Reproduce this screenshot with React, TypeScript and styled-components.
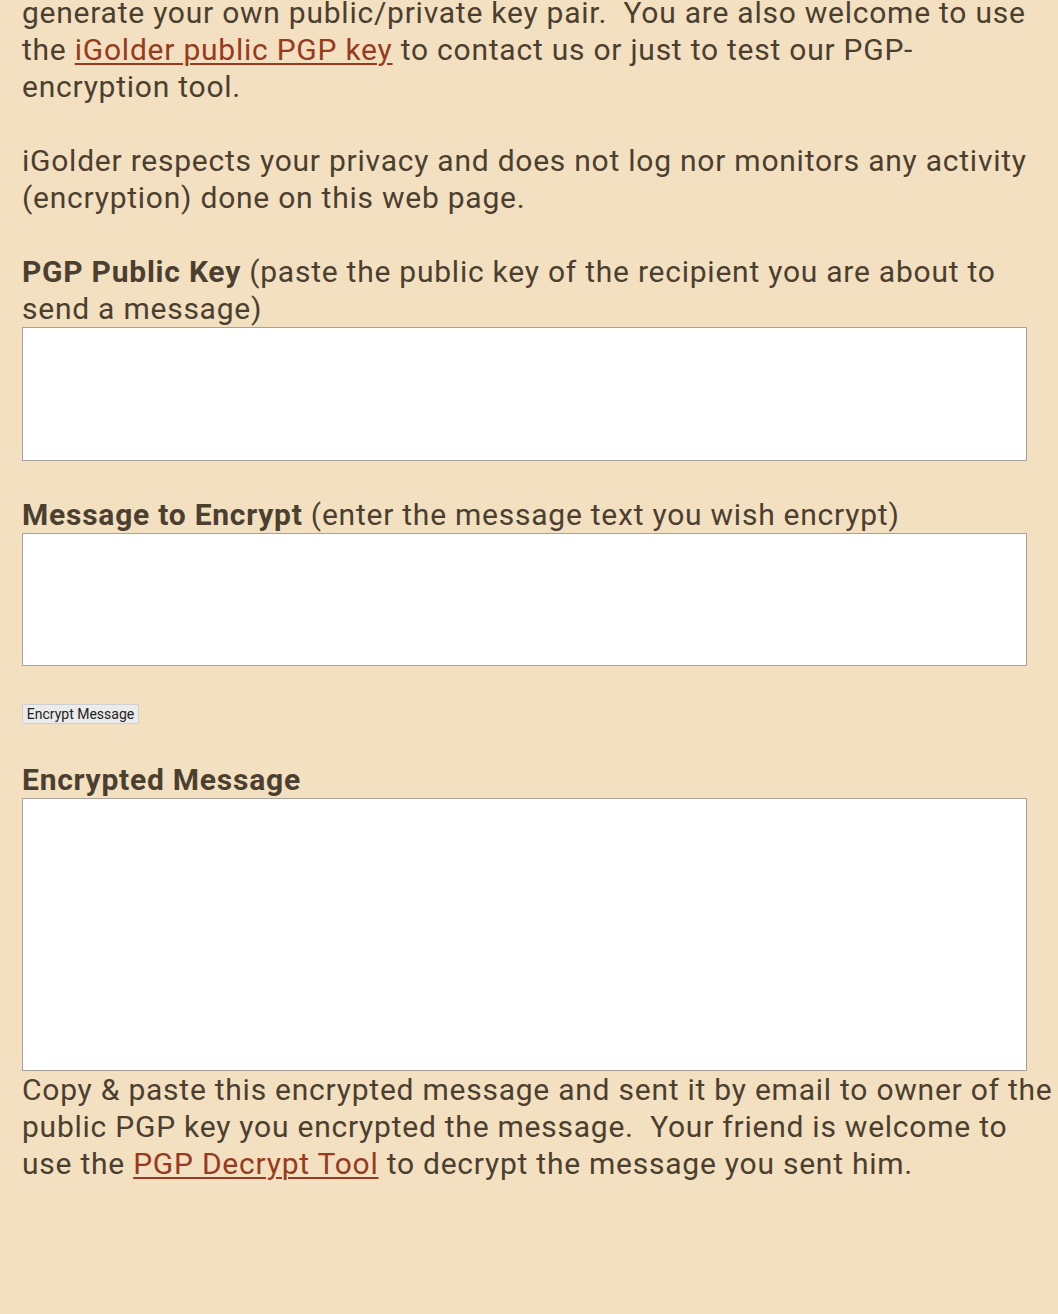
import styled, { createGlobalStyle } from "styled-components";

const GlobalStyle = createGlobalStyle`
  html, body {
    margin: 0;
    padding: 0;
    background: #f3e0c1;
  }
  body {
    font-family: Roboto, "Noto Sans", "Liberation Sans", sans-serif;
    color: #4b3f2f;
  }
`;

const Page = styled.div`
  width: 1058px;
  padding-left: 22px;
  min-height: 1314px;
  box-sizing: border-box;
  font-size: 30px;
  line-height: 37px;
  letter-spacing: 0.76px;
`;

const Para = styled.p<{ $first?: boolean }>`
  margin: ${(p) => (p.$first ? "-6px" : "0")} 0 37px;
`;

const TextLink = styled.a`
  color: #973a20;
  text-decoration: underline;
  text-decoration-thickness: 2px;
  text-underline-offset: 3px;
`;

const Label = styled.div`
  b {
    font-weight: 700;
  }
`;

const Heading = styled.div`
  font-weight: 700;
`;

const Box = styled.textarea<{ $h: number }>`
  display: block;
  width: 1005px;
  height: ${(p) => p.$h}px;
  margin: 0;
  box-sizing: border-box;
  border: 1px solid #a8a39a;
  background: #fff;
  resize: none;
  font-family: "Liberation Mono", monospace;
`;

const Section = styled.div<{ $gap: number }>`
  margin-bottom: ${(p) => p.$gap}px;
`;

const Button = styled.button`
  display: block;
  margin: 0 0 37px;
  height: 20px;
  width: 117px;
  padding: 0 2px;
  font-family: Roboto, "Liberation Sans", sans-serif;
  font-size: 14px;
  letter-spacing: 0;
  color: #222;
  background: #ebebeb;
  border: 1px solid #cfcfcf;
  border-radius: 1px;
`;

const App = () => {
  return (
    <>
      <GlobalStyle />
      <Page>
        <Para $first>
          generate your own public/private key pair.{"\u00a0 "}You are also welcome to use the{" "}
          <TextLink href="#">iGolder public PGP key</TextLink> to contact us or just to test our
          PGP-encryption tool.
        </Para>
        <Para>
          iGolder respects your privacy and does not log nor monitors any activity (encryption)
          done on this web page.
        </Para>
        <Section $gap={35}>
          <Label>
            <b>PGP Public Key</b> (paste the public key of the recipient you are about to send a
            message)
          </Label>
          <Box $h={134} />
        </Section>
        <Section $gap={38}>
          <Label>
            <b>Message to Encrypt</b> (enter the message text you wish encrypt)
          </Label>
          <Box $h={133} />
        </Section>
        <Button>Encrypt Message</Button>
        <Section $gap={0}>
          <Heading>Encrypted Message</Heading>
          <Box $h={273} />
        </Section>
        <Para>
          Copy &amp; paste this encrypted message and sent it by email to owner of the public PGP
          key you encrypted the message.{"\u00a0 "}Your friend is welcome to use the{" "}
          <TextLink href="#">PGP Decrypt Tool</TextLink> to decrypt the message you sent him.
        </Para>
      </Page>
    </>
  );
};

export default App;
